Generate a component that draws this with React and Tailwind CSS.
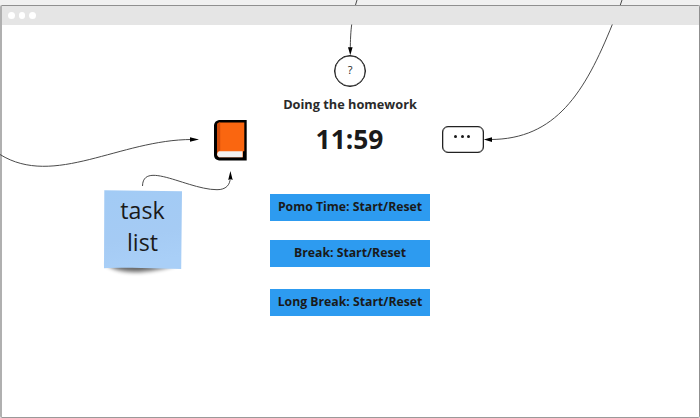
function WindowBar() {
  return (
    <header className="flex h-[19px] shrink-0 items-center gap-[4px] bg-[#e5e5e5] pl-[6px]">
      <span className="size-[6.5px] rounded-full bg-white" />
      <span className="size-[6.5px] rounded-full bg-white" />
      <span className="size-[6.5px] rounded-full bg-white" />
    </header>
  );
}

function TimerButton({ children, className }) {
  return (
    <button
      className={`flex w-[160px] shrink-0 justify-center bg-[#2d9bf0] text-[12.25px] leading-[25px] font-bold whitespace-nowrap text-[#1a1a1a] ${className}`}
    >
      {children}
    </button>
  );
}

function Connectors() {
  return (
    <svg
      className="pointer-events-none absolute inset-0"
      width="700"
      height="418"
      viewBox="0 0 700 418"
      fill="none"
      stroke="#4a4a4a"
      strokeWidth="1"
    >
      <path d="M357 0L355.5 5M351.7 24.5C350.8 31 350.3 40 350.3 50" />
      <path d="M622 0L620.3 5M612.3 24.5C585 92 556 139.5 490 139.5" />
      <path d="M0 154.5C54 188 120 139.5 192 139.5" />
      <path d="M142.5 186C143 160 188 189.7 217 189.7C226 189.7 230 185 230.3 178" />
      <g fill="#000" stroke="none">
        <path d="M350.3 55.3L348 47.3H352.6Z" />
        <path d="M483.8 139.6L492 137.3V141.9Z" />
        <path d="M199 139.5L190 137.3V141.7Z" />
        <path d="M230.4 171L228.2 180L230.4 179L232.7 180Z" />
      </g>
    </svg>
  );
}

function BookIcon() {
  return (
    <svg className="absolute left-[213px] top-[119px]" width="35" height="43" viewBox="0 0 35 43">
      <path d="M6 1H33.7V41.5H6Q1 40.5 1 36V6Q1.5 2 6 1Z" fill="#000" />
      <path d="M6 3.5H31.3V32.3H30V38.3H6Q4 37.5 4 35V6Q4 4 6 3.5Z" fill="#fa6610" />
      <path d="M4 6Q4 4 7.2 3.5V31.5Q4.8 32 4 34.5Z" fill="#cf4c0b" />
      <path d="M6 32.3H29.5V38.3H6Q4.2 37.5 4.2 35.3T6 32.3Z" fill="#f1f1f1" />
    </svg>
  );
}

function StickyNote() {
  return (
    <div className="absolute left-[104px] top-[190px] h-[86px] w-[78px]">
      <svg className="absolute inset-0 overflow-visible" width="78" height="86" viewBox="0 0 78 86">
        <defs>
          <linearGradient id="paper" x1="0" y1="0" x2="0.2" y2="1">
            <stop offset="0" stopColor="#a2cbf5" />
            <stop offset="0.65" stopColor="#a5cbf4" />
            <stop offset="1" stopColor="#a9cff7" />
          </linearGradient>
          <filter id="shade" x="-20%" y="-80%" width="140%" height="300%">
            <feGaussianBlur stdDeviation="2.2" />
          </filter>
        </defs>
        <path d="M3 73L72 75Q60 79 40 81.5Q16 84 3 75Z" fill="#000" opacity="0.6" filter="url(#shade)" />
        <path d="M0.3 0.2L78 1.3L77.2 79L28 77.8Q10 77.5 0 78.2Z" fill="url(#paper)" />
      </svg>
      <p className="relative pt-[4px] pr-px text-center text-[23.2px] leading-[32px] text-[#1a1a1a]">
        task
        <br />
        list
      </p>
    </div>
  );
}

function MoreMenu() {
  return (
    <button className="absolute left-[442px] top-[126px] flex h-[27px] w-[42px] justify-center gap-[3.6px] rounded-[6px] border border-[#222] bg-white pt-[8px] pr-[2px] ring-[0.3px] ring-[#222] ring-inset">
      <span className="size-[3px] shrink-0 rounded-full bg-[#1a1a1a]" />
      <span className="size-[3px] shrink-0 rounded-full bg-[#1a1a1a]" />
      <span className="size-[3px] shrink-0 rounded-full bg-[#1a1a1a]" />
    </button>
  );
}

export default function App() {
  return (
    <div className="relative flex h-[418px] w-[700px] overflow-hidden bg-[#f0f0f0] pt-[5px] font-['Open_Sans','Noto_Sans',sans-serif] text-[#1a1a1a]">
      <div className="flex w-full flex-col rounded-[2px] border border-[#8f8f8f] border-l-[2px] border-l-[#b0b0b0] border-b-[#999] bg-white">
        <WindowBar />
        <main className="flex flex-col items-center pr-px">
          <div className="mt-[30px] flex size-[32px] items-center justify-center rounded-full border border-[#1a1a1a] pb-[1px] text-[11px] ring-[0.4px] ring-[#1a1a1a] ring-inset">
            ?
          </div>
          <h1 className="mt-[8px] text-[12.75px] leading-[18px] font-bold whitespace-nowrap text-[#2a2a2a]">Doing the homework</h1>
          <div className="mt-[8px] pr-px text-[26.4px] leading-[36px] font-bold">11:59</div>
          <TimerButton className="mt-[37px] h-[27px]">Pomo Time: Start/Reset</TimerButton>
          <TimerButton className="mt-[19px] h-[27px]">Break: Start/Reset</TimerButton>
          <TimerButton className="mt-[22px] h-[27px]">Long Break: Start/Reset</TimerButton>
        </main>
      </div>
      <Connectors />
      <BookIcon />
      <StickyNote />
      <MoreMenu />
    </div>
  );
}
